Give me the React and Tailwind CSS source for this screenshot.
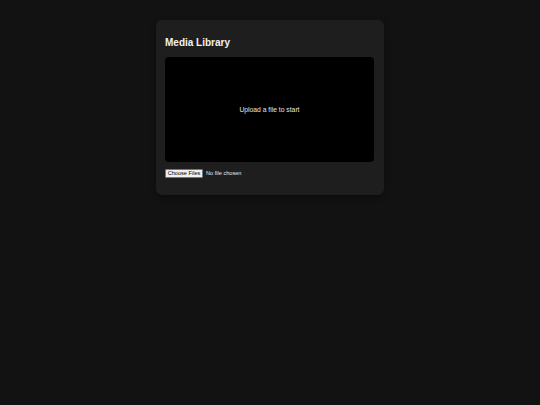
import React from 'react'

export default function App() {
  return (
    <div className="min-h-screen w-full bg-[#121212] pt-[20px] font-['Liberation_Sans',Arial,sans-serif]">
      <div className="mx-auto w-[228px] rounded-[6px] bg-[#1e1e1e] pt-[16px] pb-[17px] pl-[9px] pr-[10px] shadow-[0_2px_6px_rgba(0,0,0,0.35)]">
        {/* Header */}
        <h2 className="text-[10px] leading-[14px] font-bold text-[#f2f2f2]">Media Library</h2>

        {/* Preview */}
        <div className="mt-[7px] flex h-[105px] items-center justify-center rounded-[4px] bg-black">
          <p className="text-[6.75px] leading-[10px] text-[#e6e6e6]">Upload a file to start</p>
        </div>

        {/* File picker */}
        <div className="mt-[7px] flex items-center gap-[3px]">
          <button className="flex h-[9px] w-[38px] items-center justify-center whitespace-nowrap rounded-[1px] border border-[#767676] bg-[#efefef] p-0 text-[5.6px] leading-[7px] text-black">
            Choose Files
          </button>
          <span className="whitespace-nowrap text-[5.6px] leading-[9px] text-[#e8e8e8]">No file chosen</span>
        </div>
      </div>
    </div>
  )
}
